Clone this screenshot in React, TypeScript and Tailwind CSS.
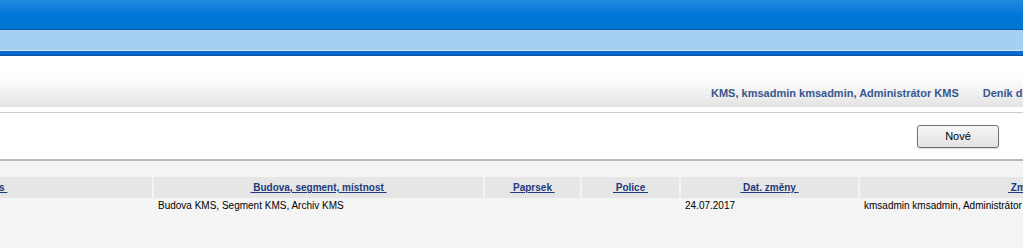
import React from "react";

const columns = [
  { title: "Popis", width: "w-[322px]" },
  { title: "Budova, segment, místnost", width: "w-[331px]" },
  { title: "Paprsek", width: "w-[97px]" },
  { title: "Police", width: "w-[99px]" },
  { title: "Dat. změny", width: "w-[179px]" },
  { title: "Změnil", width: "w-[336px]" },
];

const row = ["", "Budova KMS, Segment KMS, Archiv KMS", "", "", "24.07.2017", "kmsadmin kmsadmin, Administrátor KMS"];

export default function App() {
  return (
    <div className="w-[1023px] h-[248px] overflow-hidden bg-[#f4f4f4] font-['Liberation_Sans',Arial,sans-serif]">
      {/* top bars */}
      <div className="h-[30px] bg-gradient-to-b from-[#1f89de] via-[#0078d7] to-[#0074d2] border-b border-[#0a5aa8]" />
      <div className="h-[21px] bg-[#a6d0f1] border-b border-[#cce6fa]" />
      <div className="h-[5px] bg-[#0a69cc] border-b border-[#0a56a8]" />

      {/* user line */}
      <div className="h-[51px] bg-[linear-gradient(to_bottom,#ffffff_0%,#ffffff_40%,#f2f2f2_70%,#e3e3e3_100%)] flex items-end pb-[6px]">
        <div className="flex gap-[24px] pl-[711px] whitespace-nowrap text-[11px] font-bold text-[#38578f]">
          <span>KMS, kmsadmin kmsadmin, Administrátor KMS</span>
          <span>Deník dokumentů</span>
        </div>
      </div>
      <div className="h-[6px] bg-white border-b border-[#cccccc]" />

      {/* toolbar */}
      <div className="h-[48px] bg-white border-b-2 border-[#b9b9b9] flex items-center justify-end pr-[24px]">
        <button
          type="button"
          className="w-[82px] h-[23px] rounded-[3px] border border-[#707070] bg-gradient-to-b from-[#f7f7f7] to-[#e2e2e2] text-[11px] text-black shadow-[0_1px_1px_rgba(0,0,0,0.15)]"
        >
          Nové
        </button>
      </div>

      {/* table */}
      <div className="pt-[16px] ml-[-170px]">
        <div className="flex h-[21px] bg-[#e6e6e6]">
          {columns.map((c, i) => (
            <div
              key={c.title}
              className={`${c.width} shrink-0 flex items-center justify-center ${i > 0 ? "border-l-2 border-[#f3f3f3]" : ""}`}
            >
              <span className="text-[10px] font-bold text-[#1d3a7c] underline whitespace-pre">{` ${c.title} `}</span>
            </div>
          ))}
        </div>
        <div className="flex h-[15px]">
          {columns.map((c, i) => (
            <div key={c.title} className={`${c.width} shrink-0 flex items-center pl-[4px] ${i > 0 ? "border-l-2 border-transparent" : ""}`}>
              <span className="text-[10px] text-black whitespace-nowrap">{row[i]}</span>
            </div>
          ))}
        </div>
      </div>
    </div>
  );
}
